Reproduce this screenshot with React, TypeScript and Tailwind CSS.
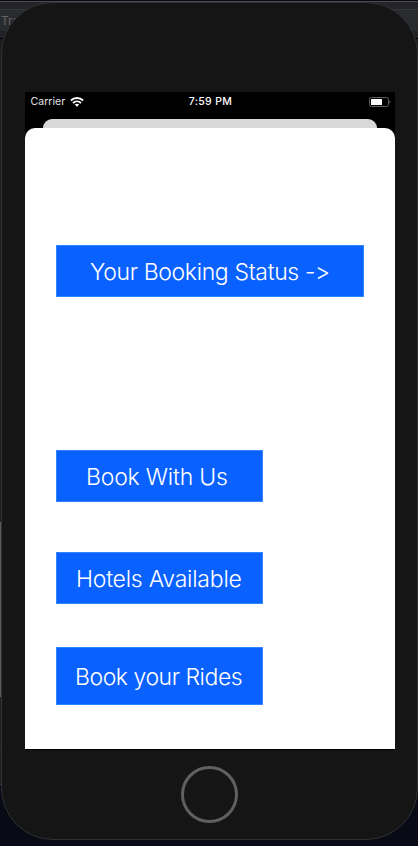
import React from "react";

function Backdrop() {
  return (
    <div className="absolute inset-0 flex flex-col bg-[#080b15]">
      <div className="h-px bg-[#08070c]" />
      <div className="h-px bg-[#4b4951]" />
      <div className="h-[7px] bg-[#23232a]" />
      <div className="h-[22px] border-t border-[#36373b] bg-[#2a2b2f] pl-px text-[12px] leading-[21px] text-[#626267]">Tra</div>
      <div className="h-[7px] bg-[#212227]" />
      <div className="h-[52px] border-t border-black bg-[#1d1d1f]" />
      <div className="h-[31px] border-t border-[#101012] bg-[#1d1d1f]" />
      <div className="h-[401px] border-t border-[#101012] bg-[#1d1d1f]" />
      <div className="h-[175px] w-[6px] rounded-r-sm bg-[#5a5b5b]" />
      <div className="h-[52px] bg-[#202022]" />
      <div className="h-[36px] border-y border-[#38383a] bg-[#202022]" />
    </div>
  );
}

function WifiMark() {
  return (
    <svg className="h-[10px] w-[14px]" viewBox="0 0 14 10" fill="none" stroke="white">
      <path d="M.9 3.5C4.4.2 9.6.2 13.1 3.5" strokeWidth="1.9" />
      <path d="M3 6C5.3 3.8 8.7 3.8 11 6" strokeWidth="1.8" />
      <path d="M4.8 7.6Q7 5.8 9.2 7.6L7 9.8Z" fill="white" stroke="none" />
    </svg>
  );
}

function Battery() {
  return (
    <svg className="h-[10px] w-[22px]" viewBox="0 0 22 10" fill="none">
      <rect x=".5" y=".5" width="19" height="9" rx="2" stroke="#606060" />
      <rect x="2" y="2" width="11" height="6" rx=".5" fill="white" />
      <path d="M20.5 3.5Q22.3 5 20.5 6.5Z" fill="#777" />
    </svg>
  );
}

function StatusBar() {
  return (
    <div className="grid h-[27px] grid-cols-3 items-start pl-[6px] pr-[4px] pt-[3px] text-[10.5px] leading-[13px] text-[#e4e4e4]">
      <div className="flex items-center gap-[4px]">
        <span className="w-[35px] tracking-[0.05px]">Carrier</span>
        <WifiMark />
      </div>
      <span className="text-center text-[10.5px] font-medium tracking-[0.35px] text-white">7:59 PM</span>
      <div className="flex h-[13px] items-center justify-end"><Battery /></div>
    </div>
  );
}

function ActionButton({ label, className }: { label: string; className: string }) {
  return (
    <button className={`block whitespace-nowrap bg-[#0961ff] pt-[2px] text-left text-[23px] font-[350] text-white outline-1 -outline-offset-1 outline-[#3285ff] [font-feature-settings:'calt'_0] ${className}`}>
      {label}
    </button>
  );
}

export default function App() {
  return (
    <main className="relative h-[846px] w-[418px] overflow-hidden font-['Inter','Liberation_Sans',sans-serif]">
      <Backdrop />
      <div className="relative mt-[2px] ml-px flex h-[838px] w-[417px] flex-col items-center rounded-[52px] border border-[#303133] bg-[#151515] pt-[89px]">
        <section className="flex h-[658px] w-[370px] shrink-0 flex-col bg-black pb-px">
          <StatusBar />
          <div className="mx-[18px] h-[10px] shrink-0 rounded-t-[9px] bg-[#d9d9d9]" />
          <div className="-mt-px flex flex-1 flex-col items-start rounded-t-[10px] bg-white px-[31px] pt-[117px]">
            <ActionButton label="Your Booking Status ->" className="h-[52px] w-[308px] pl-[34.5px] tracking-[-0.35px]" />
            <ActionButton label="Book With Us" className="mt-[153px] h-[52px] w-[207px] pl-[30.5px] tracking-[-0.2px]" />
            <ActionButton label="Hotels Available" className="mt-[50px] h-[52px] w-[207px] pl-[20.5px] tracking-[-0.24px]" />
            <ActionButton label="Book your Rides" className="mt-[43px] h-[58px] w-[207px] pl-[19.5px] tracking-[-0.46px]" />
          </div>
        </section>
        <button aria-label="Home" className="mt-[16px] h-[57px] w-[57px] rounded-full border-[3px] border-[#606060]" />
      </div>
    </main>
  );
}
